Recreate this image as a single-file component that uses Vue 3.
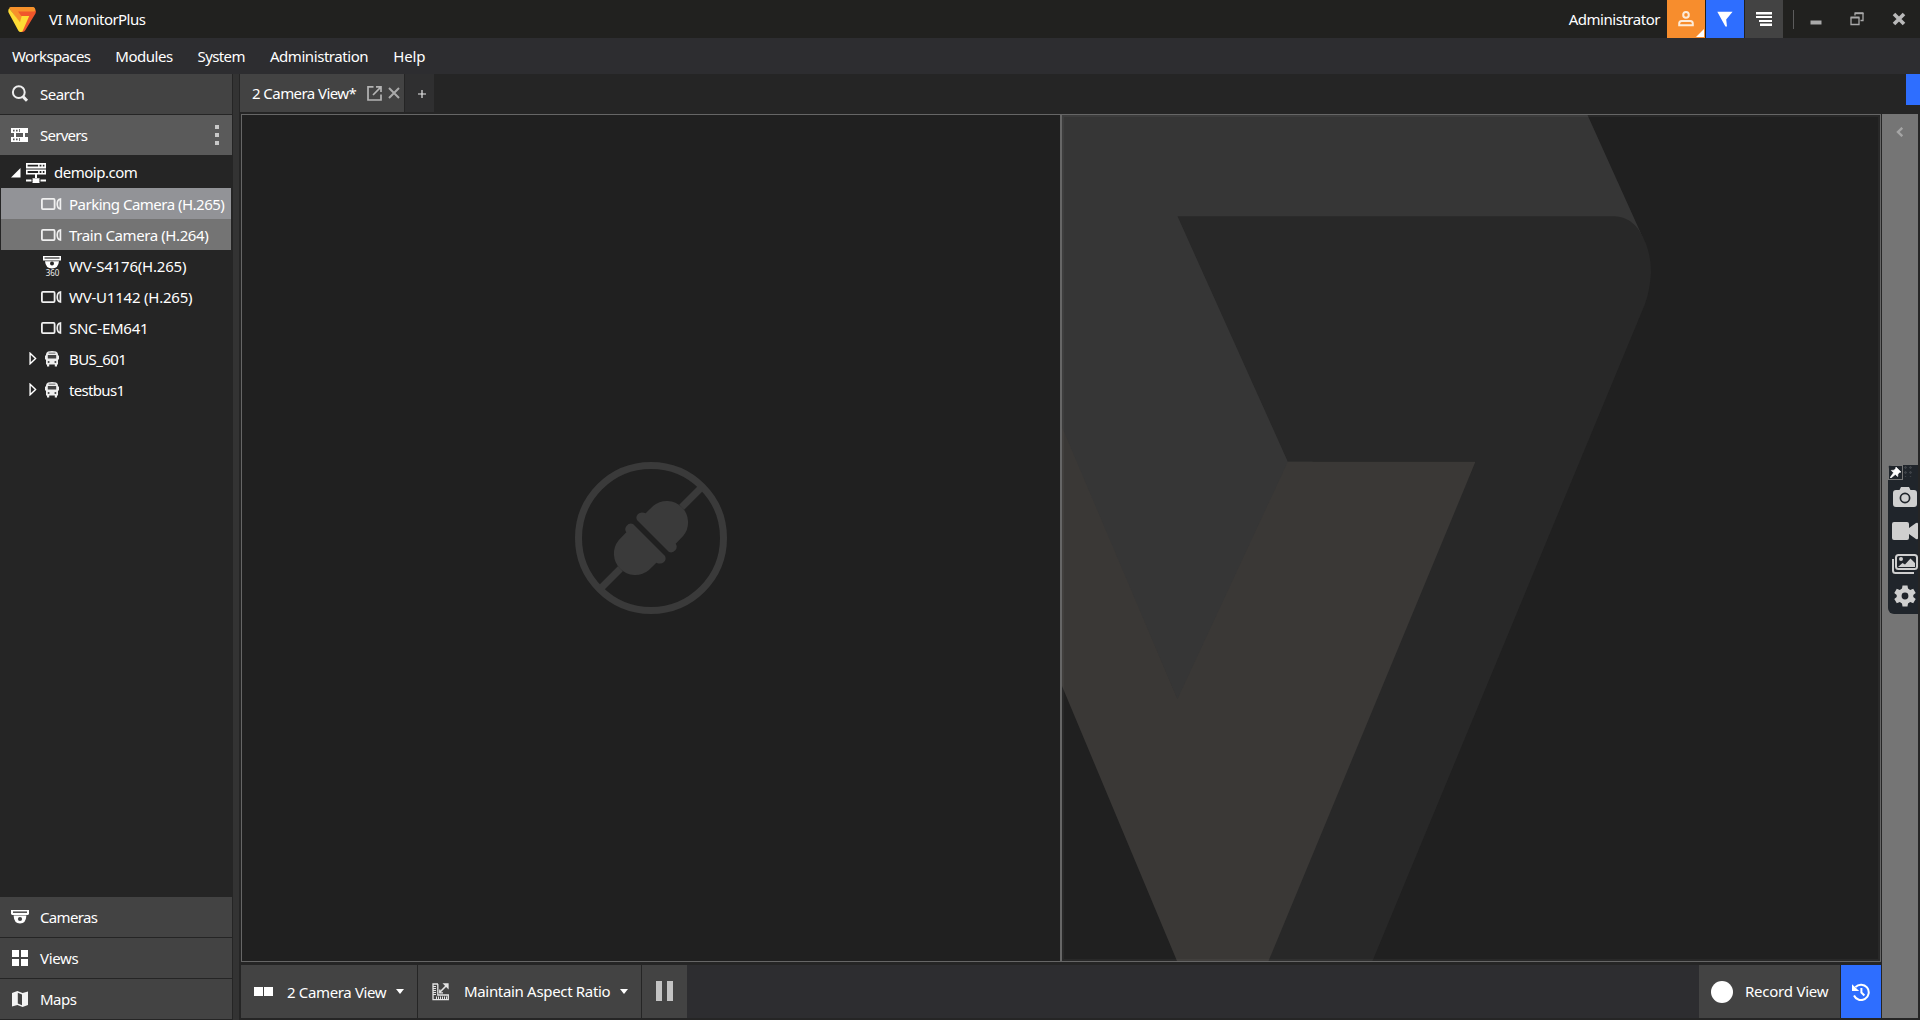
<script setup>
const menu = [
  { label: 'Workspaces', w: 78 },
  { label: 'Modules', w: 57 },
  { label: 'System', w: 47 },
  { label: 'Administration', w: 98 },
  { label: 'Help', w: 32 },
]

const devices = [
  { label: 'Parking Camera (H.265)', w: 155, icon: 'camera', state: 'selected' },
  { label: 'Train Camera (H.264)', w: 139, icon: 'camera', state: 'hovered' },
  { label: 'WV-S4176(H.265)', w: 117, icon: 'dome360' },
  { label: 'WV-U1142 (H.265)', w: 123, icon: 'camera' },
  { label: 'SNC-EM641', w: 79, icon: 'camera' },
  { label: 'BUS_601', w: 57, icon: 'bus' },
  { label: 'testbus1', w: 55, icon: 'bus' },
]

// Tracks a label so that it fills the given width.
const vFit = {
  mounted(el, { value }) {
    const natural = el.getBoundingClientRect().width
    const n = el.textContent.length
    el.style.letterSpacing = ((value + 0.3 - natural) / n).toFixed(3) + 'px'
  },
}
</script>

<template>
  <div class="app">
    <header class="titlebar">
      <svg class="logo" viewBox="0 0 84 76">
        <path fill="#f7922b" d="M8 0H77Q82 2 83 9L80 18H50L46 32L36 50L3 4Q4 0 8 0Z" />
        <path fill="#f0562b" d="M30 14H80L84 9Q85 14 83 20L52 71Q49 76 44 76H36L62 27H40Z" />
        <path fill="#fedc35" d="M3 4L36 46L41 27H64L44 73Q42 76 38 76Q33 76 31 72L1 17Q-1 9 3 4Z" />
      </svg>
      <span v-fit="96" class="app-name">VI MonitorPlus</span>
      <div class="spacer"></div>
      <span v-fit="91" class="user-name">Administrator</span>
      <div class="tb user">
        <svg width="16" height="16" viewBox="0 0 16 16" fill="none" stroke="#fdebd8" stroke-width="2">
          <circle cx="8" cy="3.9" r="2.8" />
          <path d="M1.2 14.2V12.6Q1.2 10 3.6 10H12.4Q14.8 10 14.8 12.6V14.2Z" />
        </svg>
        <i class="corner"></i>
      </div>
      <div class="tb flag">
        <svg width="16" height="16" viewBox="0 0 16 16"><path fill="#fff" d="M.3 .8H15.6L9.2 8.4L10 15.6H8.4Z" /></svg>
      </div>
      <div class="tb list">
        <svg width="16" height="14" viewBox="0 0 16 14" fill="#fff"><path d="M0 0h16v2.4H0zM0 4h16v2H0zM3 8h13v2H3zM4 11.6h12v2.4H4z" /></svg>
      </div>
      <i class="divider"></i>
      <div class="win">
        <svg width="12" height="14" viewBox="0 0 12 14"><path fill="#a9a9a9" d="M.5 8.5h11v4H.5z" /></svg>
        <svg width="14" height="14" viewBox="0 0 14 14" fill="none" stroke="#a9a9a9" stroke-width="1.3"><path d="M1 5.5V12.5H9V5.5" /><path stroke-width="2" d="M.5 5.5H9.5" /><path d="M5 3.500V1.500M13 1V8.500H10.500" /><path stroke-width="2" d="M4.500 1.200H13.500" /></svg>
        <svg width="14" height="14" viewBox="0 0 14 14" stroke="#b9b9b9" stroke-width="3.600"><path d="M2 2L12 12M12 2L2 12" /></svg>
      </div>
    </header>

    <nav class="menu">
      <span v-for="m in menu" :key="m.label" v-fit="m.w">{{ m.label }}</span>
    </nav>

    <div class="body">
      <aside class="sidebar">
        <div class="bar">
          <svg width="18" height="18" viewBox="0 0 18 18" fill="none" stroke="#eee"><circle cx="7.800" cy="7.200" r="5.900" stroke-width="2" /><path stroke-width="3" d="M12 11.600L16 15.800" /></svg>
          <span v-fit="44">Search</span>
        </div>
        <div class="bar active">
          <svg width="18" height="14" viewBox="0 0 18 14"><path fill="#fff" d="M0 0h17v5H0zM0 9h17v5H0zM3 5h2v4H3zM12 5h2v4h-2z" /><path fill="#555" d="M2 1.800h1.600v1.600H2zM5 1.800h1.600v1.600H5zM2 10.600h1.600v1.600H2zM5 10.600h1.600v1.600H5zM8 1h.800v3H8zM8 10h.800v3H8z" /></svg>
          <span v-fit="47">Servers</span>
          <i class="dots"><b></b><b></b><b></b></i>
        </div>

        <div class="tree">
          <div class="root">
            <svg class="open" width="10" height="10" viewBox="0 0 10 10"><path fill="#fff" d="M9.500 0V9.500H0Z" /></svg>
            <svg class="server" width="20" height="20" viewBox="0 0 20 20">
              <path fill="#fff" d="M0 0h20v5.400H0zM0 6.400h20v5H0zM9 11h2v4H9zM0 16.400h20v2.200H0zM6.500 15.200h7V20h-7z" />
              <path fill="#252525" d="M1.600 1.700h10.500v1.900H1.600zM13.600 1.700h1.800v1.900h-1.800zM16.800 1.700h1.600v1.900h-1.600zM1.600 8h10.500v1.900H1.600zM13.600 8h1.800v1.900h-1.800zM16.800 8h1.600v1.900h-1.600zM5.500 16h1v3h-1zM13.500 16h1v3h-1z" />
            </svg>
            <span v-fit="83">demoip.com</span>
          </div>
          <div v-for="d in devices" :key="d.label" class="node" :class="d.state">
            <div class="expander">
              <svg v-if="d.icon === 'bus'" width="8" height="13" viewBox="0 0 8 13"><path fill="none" stroke="#fff" stroke-width="1.400" d="M1.100 1.200V11.800L6.600 6.500Z" /></svg>
            </div>
            <div class="icon">
              <svg v-if="d.icon === 'camera'" width="21" height="12" viewBox="0 0 21 12" fill="none" stroke="#f0f0f0"><rect x=".9" y=".9" width="12.700" height="10.200" rx="1" stroke-width="1.800" /><path stroke-width="1.700" d="M19.400 1C15.200 1.600 15.200 10.400 19.400 11Z" /></svg>
              <svg v-else-if="d.icon === 'dome360'" class="dome" width="20" height="20" viewBox="0 0 20 20">
                <path fill="#fff" d="M1 0H19V4.600H1ZM3 5.200H17Q16.400 12.400 10 12.600Q3.600 12.400 3 5.200Z" />
                <path fill="#252525" d="M2.500 1.400h15v1.200h-15z" /><circle cx="10" cy="7.600" r="2" fill="#252525" />
                <text x="10.500" y="19.600" text-anchor="middle" font-size="8" fill="#eee" font-family="Noto Sans, sans-serif">360</text>
              </svg>
              <svg v-else width="14" height="16" viewBox="0 0 14 16">
                <path fill="#eee" d="M3 .6Q7 -.6 11 .6Q13 1.400 13 3.600V13.500H12V15.400H9.800V13.500H4.200V15.400H2V13.500H1V3.600Q1 1.400 3 .6ZM0 4.400h1v4H0zM13 4.400h1v4h-1z" />
                <path fill="#252525" d="M3.600 1.800h6.800v.8H3.600zM2.800 4h8.400v3.400H2.800z" opacity=".85" />
                <circle cx="3.600" cy="11" r="1" fill="#444" /><circle cx="10.400" cy="11" r="1" fill="#444" />
              </svg>
            </div>
            <span v-fit="d.w">{{ d.label }}</span>
          </div>
        </div>

        <div class="bar">
          <svg width="18" height="14" viewBox="0 0 18 14"><path fill="#fff" d="M0 0H18V4L17 5H1L0 4ZM2.600 5.400H15.400Q15 13.400 9 13.600Q3 13.400 2.600 5.400Z" /><path fill="#555" d="M2 1.400h14v1.600H2z" /><circle cx="9" cy="9" r="2.100" fill="#434343" /></svg>
          <span v-fit="57">Cameras</span>
        </div>
        <div class="bar">
          <svg width="18" height="16" viewBox="0 0 18 16"><path fill="#fff" d="M1 0h7v7H1zM10 0h7v7h-7zM1 9h7v7H1zM10 9h7v7h-7z" /></svg>
          <span v-fit="38">Views</span>
        </div>
        <div class="bar">
          <svg width="18" height="16" viewBox="0 0 18 16"><path fill="#f4f4f4" d="M1 2L6.400 0L11.600 2L17 .4V14L11.600 16L6.400 14L1 15.600Z" /><path fill="#434343" d="M6.800 1.800L11 3.400V14.200L6.800 12.600Z" /></svg>
          <span v-fit="36">Maps</span>
        </div>
      </aside>

      <div class="splitter"></div>

      <main class="main">
        <div class="tabs">
          <div class="tab">
            <span v-fit="104">2 Camera View*</span>
            <svg class="pop" width="15" height="15" viewBox="0 0 15 15" fill="none" stroke="#b4b4b4" stroke-width="1.700"><path d="M6.500 .9H1V14H14V8.500" /><path d="M9 .9H14V6M14 .9L6 9" /></svg>
            <svg class="x" width="12" height="12" viewBox="0 0 12 12" stroke="#aaa" stroke-width="2"><path d="M1 1L11 11M11 1L1 11" /></svg>
          </div>
          <div class="add"><svg width="8" height="8" viewBox="0 0 8 8"><path fill="#e8e8e8" d="M3.400 0h1.200v3.400H8v1.200H4.600V8H3.400V4.600H0V3.400h3.400z" /></svg></div>
          <div class="spacer"></div>
          <i class="blue-tab"></i>
        </div>

        <div class="stage">
          <div class="left">
            <div class="panes">
              <section class="pane lost">
                <svg width="180" height="180" viewBox="3 -5 540 540">
                  <g fill="none" stroke="#3a3a3a"><circle cx="273" cy="265" r="217.500" stroke-width="21" /><path stroke-width="21" d="M422 116L365 173M124 414L181 357" /></g>
                  <g fill="#3a3a3a">
                    <path d="M231 211Q226 201 234 193Q243 185 257 191L280 168A64 64 0 0 1 370 258L347 282Q354 292 346 302Q338 311 327 307Z" />
                    <path transform="rotate(180 273 265)" d="M231 211Q226 201 234 193Q243 185 257 191L280 168A64 64 0 0 1 370 258L347 282Q354 292 346 302Q338 311 327 307Z" />
                  </g>
                </svg>
              </section>
              <section class="pane brand">
                <svg viewBox="1062 115 818 846" preserveAspectRatio="none">
                  <path fill="#363636" d="M1062 115H1587.500L1643 238L1300 470L1177.500 700L1062 430Z" />
                  <path fill="#282828" d="M1177.500 216.300H1615Q1630 217 1639.500 231Q1651 249 1651 272Q1650 290 1645 304L1372.500 961H1260L1475.500 461.700H1287.800Z" />
                  <path fill="#3a3836" d="M1062 427L1177.500 699L1287.800 461.700H1475.500L1268.500 961H1177L1062 686Z" />
                </svg>
                <i class="edge"></i>
              </section>
            </div>
            <footer class="tools">
              <div class="btn layout">
                <svg width="19" height="9" viewBox="0 0 19 9"><path fill="#fff" d="M0 0h9v9H0zM10 0h9v9h-9z" /></svg>
                <span v-fit="99">2 Camera View</span>
                <i class="caret"></i>
              </div>
              <div class="btn aspect">
                <svg width="17" height="18" viewBox="0 0 17 18" fill="none" stroke="#e4e4e4"><path stroke-width="1.300" d="M6 1H1V16.600H16.300V12H5.800V1" /><path stroke-width="1" d="M1 3.500H4M1 5.500H4M1 7.500H4M1 9.500H4M1 11.500H4M4.500 13.500V17M6.500 13.500V17M8.500 13.500V17M10.500 13.500V17M12.500 13.500V17M14.500 13.500V17" /><path stroke-width="1.600" d="M7.500 9.500L15 2" /><path fill="#e4e4e4" stroke="none" d="M10.500 .3H16.600V6.400Z" /><path stroke-width="1.300" d="M7.800 6.500V9.800H11" /></svg>
                <span v-fit="146">Maintain Aspect Ratio</span>
                <i class="caret"></i>
              </div>
              <div class="btn pause"><b></b><b></b></div>
              <div class="spacer"></div>
              <div class="btn record"><i class="dot"></i><span v-fit="83">Record View</span></div>
              <div class="btn history">
                <svg width="18" height="18" viewBox="0 0 18 18" fill="none" stroke="#fff"><path stroke-width="2" d="M3.400 4.100A7.700 7.700 0 1 1 2 12.500" /><path fill="#fff" stroke="none" d="M0 1.200V8H7.200Z" /><path stroke-width="2" d="M9.400 5V9.600L12.400 12.400" /></svg>
              </div>
            </footer>
          </div>

          <div class="rail">
            <svg class="chev" width="8" height="10" viewBox="0 0 8 10"><path fill="none" stroke="#a5a5a5" stroke-width="2.400" d="M6.300 .8L2 5L6.300 9.200" /></svg>
            <div class="float">
              <div class="pin"><svg width="11" height="11" viewBox="0 0 11 11"><path fill="#fff" stroke="#fff" stroke-width=".6" d="M6 0L11 5L9.400 5.600L7.900 7.100L7.700 9.600L5.300 7.400L1 11L0 10.800L3.500 5.800L1.300 3.400L4 3.200L5.500 1.700Z" /></svg>
                <i class="grip"></i>
              </div>
              <svg width="24" height="20" viewBox="0 0 24 20"><path fill="#cfcfcf" d="M8 0H16L17.500 3H21Q24 3 24 6V17Q24 20 21 20H3Q0 20 0 17V6Q0 3 3 3H6.500Z" /><circle cx="12" cy="11" r="4.600" fill="none" stroke="#20252b" stroke-width="1.700" /></svg>
              <svg width="26" height="18" viewBox="0 0 26 18"><path fill="#cfcfcf" d="M2 0H15Q17 0 17 2V6L24 1Q26 0 26 2V16Q26 18 24 17L17 12V16Q17 18 15 18H2Q0 18 0 16V2Q0 0 2 0Z" /></svg>
              <svg width="26" height="20" viewBox="0 0 26 20"><rect x="4" y="1" width="21" height="14" rx="2.500" fill="#20252b" stroke="#cfcfcf" stroke-width="2" /><path fill="none" stroke="#cfcfcf" stroke-width="2" d="M1 5V16.500Q1 19 3.500 19H22" /><circle cx="9" cy="5" r="2" fill="#cfcfcf" /><path fill="#cfcfcf" d="M6 13L10.500 9L13 10.500L18.500 4.500L23 9V13Z" /></svg>
              <svg width="22" height="22" viewBox="0 0 22 22"><path fill="#cfcfcf" fill-rule="evenodd" d="M8.500 .5H13.500L14 3.600L16.200 4.900L19.200 3.800L21.700 8L19.300 10V12L21.700 14L19.200 18.200L16.200 17.100L14 18.400L13.500 21.500H8.500L8 18.400L5.800 17.100L2.800 18.200L.3 14L2.700 12V10L.3 8L2.800 3.800L5.800 4.900L8 3.600ZM11 7.600A3.400 3.400 0 1 0 11 14.400A3.400 3.400 0 1 0 11 7.600Z" /></svg>
            </div>
          </div>
        </div>
      </main>
    </div>
  </div>
</template>

<style>
body {
  margin: 0;
  background: #252525;
}
</style>

<style scoped>
.app {
  width: 1920px;
  height: 1020px;
  overflow: hidden;
  display: flex;
  flex-direction: column;
  background: #252525;
  color: #fff;
  font: 15px/20px 'Noto Sans', 'Open Sans', sans-serif;
  white-space: nowrap;
}
svg {
  display: block;
  flex: none;
}
span {
  flex: none;
}
.spacer {
  flex: 1;
}
.titlebar {
  height: 38px;
  flex: none;
  display: flex;
  align-items: center;
  background: #21211f;
}
.titlebar > span {
  margin-top: -1px;
}
.logo {
  width: 28px;
  height: 25px;
  margin: 0 13px 0 8px;
}
.user-name {
  margin-right: 7px;
}
.tb {
  width: 38px;
  height: 38px;
  margin-right: 1px;
  display: flex;
  align-items: center;
  justify-content: center;
  position: relative;
}
.user {
  background: #f78d2d;
}
.flag {
  background: #2e6eff;
}
.list {
  background: #434343;
}
.corner {
  position: absolute;
  right: 1px;
  bottom: 1px;
  border-left: 8px solid transparent;
  border-bottom: 8px solid #fff;
}
.divider {
  width: 1px;
  height: 19px;
  margin-left: 9px;
  background: #5c5c5c;
}
.win {
  display: flex;
  width: 126px;
  box-sizing: border-box;
  padding: 0 14px 0 16px;
  justify-content: space-between;
}
.menu {
  height: 36px;
  flex: none;
  display: flex;
  align-items: center;
  gap: 25px;
  padding-left: 12px;
  background: #2d2d30;
}
.body {
  flex: 1;
  min-height: 0;
  display: flex;
}
.sidebar {
  width: 232px;
  flex: none;
  display: flex;
  flex-direction: column;
}
.bar {
  height: 40px;
  flex: none;
  margin-bottom: 1px;
  display: flex;
  align-items: center;
  background: #434343;
}
.bar > svg {
  margin: 0 11px;
}
.bar.active {
  background: #5a5a5a;
  margin-bottom: 0;
}
.dots {
  margin-left: auto;
  margin-right: 13px;
  display: flex;
  flex-direction: column;
  gap: 4px;
}
.dots b {
  width: 4px;
  height: 4px;
  background: #c8c8c8;
}
.tree {
  flex: 1;
}
.root {
  height: 31px;
  padding: 2px 0 0 11px;
  display: flex;
  align-items: center;
}
.root .open {
  margin-right: 5px;
}
.root .server {
  margin-right: 8px;
}
.root span {
  margin-top: -1px;
}
.node {
  height: 31px;
  margin: 0 1px;
  display: flex;
  align-items: center;
}
.node.selected {
  background: #929397;
}
.node.hovered {
  background: #747474;
}
.expander {
  width: 12px;
  padding-left: 28px;
}
.icon {
  width: 21px;
  margin-right: 7px;
  display: flex;
  justify-content: center;
}
.dome {
  overflow: visible;
}
.splitter {
  width: 6px;
  margin: 0 1px;
  flex: none;
  background: #333333;
}
.main {
  flex: 1;
  min-width: 0;
  display: flex;
  flex-direction: column;
}
.tabs {
  height: 40px;
  flex: none;
  display: flex;
}
.tab {
  width: 164px;
  height: 38px;
  box-sizing: border-box;
  padding-left: 12px;
  display: flex;
  align-items: center;
  background: #434343;
}
.pop {
  margin-left: 11px;
}
.x {
  margin-left: 6px;
}
.add {
  width: 29px;
  height: 38px;
  margin-left: 1px;
  display: flex;
  align-items: center;
  justify-content: center;
  padding-top: 2px;
  box-sizing: border-box;
  padding-left: 5px;
  background: #2f2f30;
}
.blue-tab {
  width: 14px;
  height: 31px;
  background: #2e6eff;
}
.stage {
  flex: 1;
  min-height: 0;
  display: flex;
  padding: 0 2px 2px 1px;
}
.left {
  width: 1640px;
  display: flex;
  flex-direction: column;
}
.panes {
  height: 848px;
  flex: none;
  display: flex;
}
.pane {
  width: 820px;
  box-sizing: border-box;
  border: 1px solid #666;
  background: #202020;
  position: relative;
}
.lost {
  display: flex;
  align-items: center;
  justify-content: center;
}
.brand svg {
  width: 818px;
  height: 846px;
}
.edge {
  position: absolute;
  inset: 0;
  box-shadow: inset 0 0 0 2px rgba(255, 255, 255, 0.04);
}
.tools {
  height: 53px;
  margin-top: 3px;
  display: flex;
  background: #2d2d30;
}
.btn {
  display: flex;
  align-items: center;
  box-sizing: border-box;
  background: #434343;
  border-right: 1px solid #252525;
}
.btn > span {
  margin-top: -1px;
}
.layout {
  width: 177px;
  padding-left: 13px;
}
.layout > span {
  margin: 1px 10px 0 14px;
}
.caret {
  border: 4.500px solid transparent;
  border-top: 5px solid #fff;
  border-bottom: 0;
}
.aspect {
  width: 224px;
  padding-left: 14px;
}
.aspect > span {
  margin: -1px 10px 0 15px;
}
.pause {
  width: 45px;
  justify-content: center;
  gap: 5px;
  border: 0;
  padding-bottom: 1px;
}
.pause b {
  width: 6px;
  height: 20px;
  background: #c3c3c3;
}
.record {
  width: 142px;
  padding-left: 12px;
}
.dot {
  width: 22px;
  height: 22px;
  margin-right: 12px;
  border-radius: 50%;
  background: #fff;
}
.history {
  width: 40px;
  justify-content: center;
  background: #2e6eff;
  border: 0;
}
.rail {
  width: 36px;
  margin-left: 1px;
  background: #757575;
  position: relative;
}
.chev {
  margin: 13px 0 0 14px;
}
.float {
  position: absolute;
  left: 6px;
  top: 351px;
  width: 30px;
  height: 149px;
  overflow: hidden;
  border-radius: 4px 0 0 6px;
  background: #20252b;
}
.float > svg {
  margin: 0 0 14px 4px;
}
.float > svg:nth-of-type(1) {
  margin-left: 5px;
  margin-bottom: 15px;
}
.float > svg:nth-of-type(3) {
  margin-bottom: 11px;
}
.float > svg:nth-of-type(4) {
  margin-left: 6px;
}
.pin {
  height: 22px;
  display: flex;
  align-items: flex-start;
}
.pin svg {
  padding: 1px;
  border: 1px solid #777;
}
.grip {
  width: 10px;
  height: 12px;
  background: radial-gradient(circle, #3c4046 1px, transparent 1.500px) 0 0 / 5px 5px;
}
</style>
